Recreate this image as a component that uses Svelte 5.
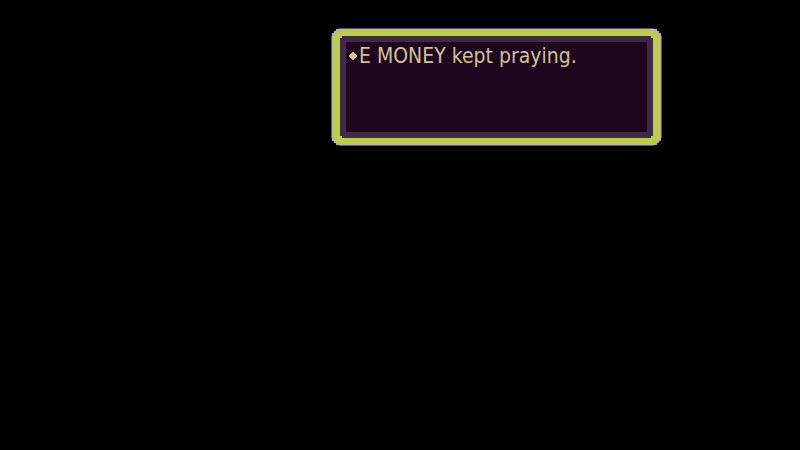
<script>
  const speaker = 'E MONEY';
  const action = 'kept praying.';
</script>

<main class="scene">
  <section class="window" aria-label="Battle message">
    <div class="band">
      <div class="inset">
        <div class="panel">
          <svg class="bullet" viewBox="0 0 8 8" aria-hidden="true">
            <path d="M3 0h2v1h1v1h1v1h1v2h-1v1h-1v1h-1v1h-2v-1h-1v-1h-1v-1h-1v-2h1v-1h1v-1h1z" />
          </svg>
          <p>{speaker} {action}</p>
        </div>
      </div>
    </div>
  </section>
</main>

<style>
  :global(body) {
    margin: 0;
    background: #000;
  }

  .scene {
    display: grid;
    grid-template-columns: 331fr 331fr 138fr;
    align-items: start;
    min-height: 100vh;
    box-sizing: border-box;
    padding-top: 28px;
    background: #000;
  }

  /* Each layer has stair-stepped corners, like tiles of a pixel frame. */
  .window,
  .band {
    clip-path: polygon(
      0 8px, 1px 8px, 1px 5px, 3px 5px, 3px 3px, 5px 3px, 5px 1px, 8px 1px, 8px 0,
      calc(100% - 8px) 0, calc(100% - 8px) 1px, calc(100% - 5px) 1px, calc(100% - 5px) 3px,
      calc(100% - 3px) 3px, calc(100% - 3px) 5px, calc(100% - 1px) 5px, calc(100% - 1px) 8px, 100% 8px,
      100% calc(100% - 8px), calc(100% - 1px) calc(100% - 8px), calc(100% - 1px) calc(100% - 5px),
      calc(100% - 3px) calc(100% - 5px), calc(100% - 3px) calc(100% - 3px), calc(100% - 5px) calc(100% - 3px),
      calc(100% - 5px) calc(100% - 1px), calc(100% - 8px) calc(100% - 1px), calc(100% - 8px) 100%,
      8px 100%, 8px calc(100% - 1px), 5px calc(100% - 1px), 5px calc(100% - 3px), 3px calc(100% - 3px),
      3px calc(100% - 5px), 1px calc(100% - 5px), 1px calc(100% - 8px), 0 calc(100% - 8px)
    );
  }

  .window {
    grid-column: 2;
    padding: 1px;
    border: 1px solid #66586a;
    background: #bdb3a4;
  }

  .band {
    padding: 6px 7px;
    background: #bdcc49;
  }

  .inset {
    padding: 6px;
    background: #402a48;
    clip-path: polygon(
      2px 0, calc(100% - 2px) 0, calc(100% - 2px) 2px, 100% 2px,
      100% calc(100% - 2px), calc(100% - 2px) calc(100% - 2px), calc(100% - 2px) 100%,
      2px 100%, 2px calc(100% - 2px), 0 calc(100% - 2px), 0 2px, 2px 2px
    );
  }

  .panel {
    display: flex;
    align-items: flex-start;
    gap: 2px;
    min-height: 90px;
    box-sizing: border-box;
    padding: 2px 3px;
    background: #20051f;
    color: #cdc299;
  }

  .bullet {
    flex: none;
    width: 8px;
    height: 8px;
    margin-top: 8px;
    fill: #d3c6a0;
  }

  p {
    margin: 0;
    font: 21px/24px "DejaVu Sans Condensed", "DejaVu Sans", sans-serif;
  }
</style>
